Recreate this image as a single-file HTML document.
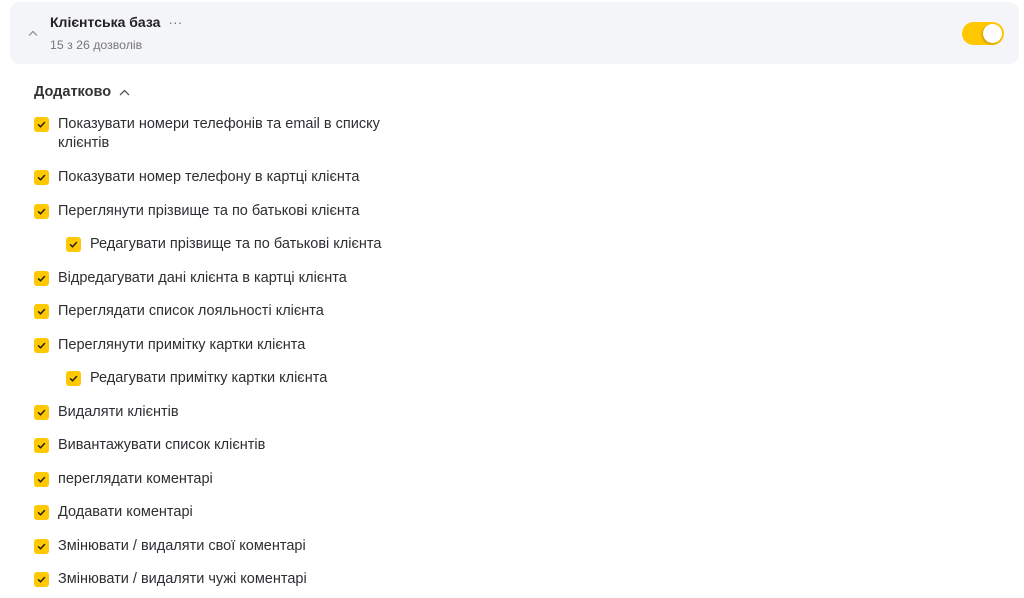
<!DOCTYPE html><html><head><meta charset="utf-8"><style>
body{margin:0;width:1024px;height:598px;background:#fff;font-family:"Liberation Sans",sans-serif;color:#2e2e33;position:relative;overflow:hidden}
.hdr{position:absolute;left:10px;top:2px;width:1009px;height:62px;background:#f4f5f9;border-radius:10px}
.t{position:absolute;font-size:14.5px;white-space:nowrap;line-height:17px}
.cb{position:absolute;width:15px;height:15px;background:#ffc800;border-radius:3px}
.cb svg{position:absolute;left:3px;top:3px}
</style></head><body>
<div class="hdr"></div>
<svg style="position:absolute;left:28px;top:30px" width="10" height="7"><path d="M1 5.5L5 1.5L9 5.5" fill="none" stroke="#888" stroke-width="1.2"/></svg>
<div class="t" style="left:50px;top:14px;font-weight:bold;font-size:14px;color:#222">Клієнтська база <span style="font-weight:normal;color:#777;margin-left:4px">···</span></div>
<div class="t" style="left:50px;top:37px;font-size:12.3px;color:#777">15 з 26 дозволів</div>
<div style="position:absolute;left:962px;top:22px;width:42px;height:23px;border-radius:12px;background:#ffc800"></div>
<div style="position:absolute;left:983px;top:24px;width:19px;height:19px;border-radius:50%;background:#fff;box-shadow:-1px 1px 2px rgba(0,0,0,.25)"></div>
<div class="t" style="left:34px;top:84px;font-weight:bold;font-size:14.5px;color:#333">Додатково</div>
<svg style="position:absolute;left:119px;top:89px" width="11" height="7"><path d="M1 6L5.5 1.5L10 6" fill="none" stroke="#555" stroke-width="1.3"/></svg>
<div id="rows"></div>
<script>
var r=[[124,0,"Показувати номери телефонів та email в списку"],[177,0,"Показувати номер телефону в картці клієнта"],[211,0,"Переглянути прізвище та по батькові клієнта"],[244,1,"Редагувати прізвище та по батькові клієнта"],[278,0,"Відредагувати дані клієнта в картці клієнта"],[311,0,"Переглядати список лояльності клієнта"],[345,0,"Переглянути примітку картки клієнта"],[378,1,"Редагувати примітку картки клієнта"],[412,0,"Видаляти клієнтів"],[445,0,"Вивантажувати список клієнтів"],[479,0,"переглядати коментарі"],[512,0,"Додавати коментарі"],[546,0,"Змінювати / видаляти свої коментарі"],[579,0,"Змінювати / видаляти чужі коментарі"]];
var h="";r.forEach(function(a){var x=a[1]?66:34;h+='<div class="cb" style="left:'+x+'px;top:'+(a[0]-7.5)+'px"><svg width="9" height="9"><path d="M1.5 4.8L3.6 6.8L7.5 2.5" fill="none" stroke="#222" stroke-width="1.5" stroke-linecap="round" stroke-linejoin="round"/></svg></div><div class="t" style="left:'+(x+24)+'px;top:'+(a[0]-8)+'px">'+a[2]+'</div>';});
h+='<div class="t" style="left:58px;top:135px">клієнтів</div>';
document.getElementById("rows").innerHTML=h;
</script>
</body></html>
